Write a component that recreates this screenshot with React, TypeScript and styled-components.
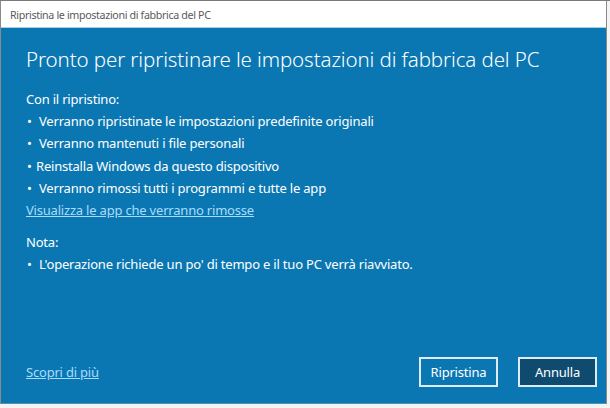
import styled, { createGlobalStyle } from "styled-components";

const GlobalStyle = createGlobalStyle`
  html, body {
    margin: 0;
    padding: 0;
    background: #ffffff;
  }
  body {
    font-family: "Noto Sans", "Open Sans", sans-serif;
  }
`;

const Screen = styled.div`
  width: 610px;
  height: 408px;
  overflow: hidden;
  background: #f4f4f4;
  border-top: 1px solid #7a7a7a;
  box-sizing: border-box;
`;

const Window = styled.div`
  width: 607px;
  height: 403px;
  display: flex;
  flex-direction: column;
  border-left: 1px solid #8a8a8a;
  border-right: 1px solid #8a8a8a;
  border-bottom: 1px solid #5a8fb0;
  box-sizing: border-box;
`;

const TitleBar = styled.div`
  height: 27px;
  flex-shrink: 0;
  display: flex;
  align-items: center;
  padding-left: 9px;
  padding-top: 1px;
  box-sizing: border-box;
  background: #ffffff;
  border-bottom: 1px solid #9fd3ec;
  color: #5a5a5a;
  font-size: 10.7px;
  letter-spacing: -0.35px;
`;

const Body = styled.div`
  flex: 1;
  display: flex;
  flex-direction: column;
  background: #0b77b2;
  color: #ffffff;
  padding: 16px 9px 16px 25px;
`;

const Heading = styled.h1`
  margin: 0 0 14px;
  font-size: 20.5px;
  font-weight: 300;
  line-height: 30px;
  letter-spacing: -0.1px;
`;

const Text = styled.div`
  font-size: 13px;
  line-height: 22px;
  letter-spacing: -0.2px;
`;

const Bullet = styled.div<{ $gap?: number }>`
  font-size: 13px;
  line-height: 22.3px;
  letter-spacing: -0.2px;
  &::before {
    content: "•";
    display: inline-block;
    width: ${(p) => p.$gap ?? 12}px;
    padding-left: 1px;
  }
`;

const Link = styled.a`
  color: #a8dcfa;
  text-decoration: underline;
  font-size: 13px;
  line-height: 22px;
  letter-spacing: -0.2px;
  width: fit-content;
  cursor: pointer;
`;

const Spacer = styled.div<{ $h: number }>`
  height: ${(p) => p.$h}px;
`;

const Footer = styled.div`
  margin-top: auto;
  display: flex;
  align-items: center;
`;

const Buttons = styled.div`
  margin-left: auto;
  display: flex;
  gap: 20px;
`;

const Button = styled.button<{ $primary?: boolean }>`
  width: 79px;
  height: 30px;
  box-sizing: border-box;
  border: 2px solid #dcebf5;
  background: ${(p) => (p.$primary ? "#0e4b6e" : "#0b77b2")};
  color: #ffffff;
  font-family: "Noto Sans", "Open Sans", sans-serif;
  font-size: 13px;
  letter-spacing: -0.2px;
  padding: 0;
  cursor: pointer;
`;

export default function App() {
  return (
    <Screen>
      <GlobalStyle />
      <Window>
        <TitleBar>Ripristina le impostazioni di fabbrica del PC</TitleBar>
        <Body>
          <Heading>Pronto per ripristinare le impostazioni di fabbrica del PC</Heading>
          <Text>Con il ripristino:</Text>
          <Bullet>Verranno ripristinate le impostazioni predefinite originali</Bullet>
          <Bullet>Verranno mantenuti i file personali</Bullet>
          <Bullet $gap={9}>Reinstalla Windows da questo dispositivo</Bullet>
          <Bullet>Verranno rimossi tutti i programmi e tutte le app</Bullet>
          <Link>Visualizza le app che verranno rimosse</Link>
          <Spacer $h={10} />
          <Text>Nota:</Text>
          <Bullet>L'operazione richiede un po' di tempo e il tuo PC verrà riavviato.</Bullet>
          <Footer>
            <Link>Scopri di più</Link>
            <Buttons>
              <Button>Ripristina</Button>
              <Button $primary>Annulla</Button>
            </Buttons>
          </Footer>
        </Body>
      </Window>
    </Screen>
  );
}
